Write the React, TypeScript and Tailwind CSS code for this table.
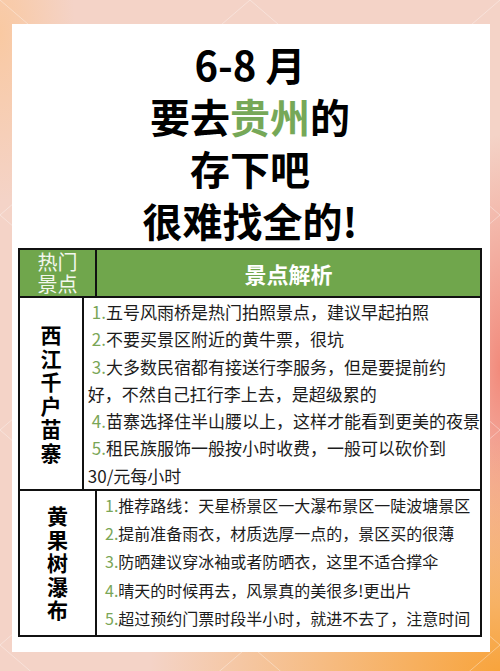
const rowOne = [
  { n: "1.", lines: ["五号风雨桥是热门拍照景点，建议早起拍照"] },
  { n: "2.", lines: ["不要买景区附近的黄牛票，很坑"] },
  { n: "3.", lines: ["大多数民宿都有接送行李服务，但是要提前约", "好，不然自己扛行李上去，是超级累的"] },
  { n: "4.", lines: ["苗寨选择住半山腰以上，这样才能看到更美的夜景"] },
  { n: "5.", lines: ["租民族服饰一般按小时收费，一般可以砍价到", "30/元每小时"] },
]

const rowTwo = [
  { n: "1.", lines: ["推荐路线：天星桥景区一大瀑布景区一陡波塘景区"] },
  { n: "2.", lines: ["提前准备雨衣，材质选厚一点的，景区买的很薄"] },
  { n: "3.", lines: ["防晒建议穿冰袖或者防晒衣，这里不适合撑伞"] },
  { n: "4.", lines: ["晴天的时候再去，风景真的美很多!更出片"] },
  { n: "5.", lines: ["超过预约门票时段半小时，就进不去了，注意时间"] },
]

function Lattice() {
  const lines = []
  for (let m = -3; m <= 5; m++) {
    const y = 215 * m
    lines.push(<line key={`a${m}`} x1={0} y1={y} x2={500} y2={y + 430} />)
    lines.push(<line key={`b${m}`} x1={0} y1={y} x2={500} y2={y - 430} />)
  }
  return (
    <svg className="absolute inset-0" width="500" height="671" viewBox="0 0 500 671">
      <g stroke="#ffffff" strokeOpacity="0.35" strokeWidth="1">{lines}</g>
    </svg>
  )
}

function Tips({ items, size }: { items: typeof rowOne; size: "lg" | "sm" }) {
  return (
    <div className={`flex-1 pl-[4px] text-[#1c1c1c] whitespace-nowrap ${size === "lg" ? "text-[17px] leading-[27.3px]" : "text-[16px] leading-[28.2px]"}`}>
      {items.map((it) =>
        it.lines.map((l, i) => (
          <div key={it.n + i} className={i === 0 ? "pl-[4px]" : ""}>
            {i === 0 && <span className="text-[#7aa657]">{it.n}</span>}
            {l}
          </div>
        ))
      )}
    </div>
  )
}

function Place({ name }: { name: string }) {
  return (
    <div className="w-[77px] border-r-2 border-[#111] flex items-center justify-center">
      <p className="w-[21px] break-all text-center text-[21px] leading-[23.5px] font-bold text-black">{name}</p>
    </div>
  )
}

export default function App() {
  return (
    <div className="relative w-[500px] h-[671px] overflow-hidden bg-[#f4d3c7] bg-[image:radial-gradient(ellipse_70%_35%_at_100%_100%,#f8a43c_0%,rgba(248,164,60,0)_100%),radial-gradient(ellipse_12%_35%_at_100%_55%,#f28a7b_0%,rgba(242,138,123,0)_100%),radial-gradient(ellipse_15%_25%_at_0%_5%,#f9c9a2_0%,rgba(249,201,162,0)_100%)] pt-[24px] pl-[12px] font-['Noto_Sans_CJK_SC',sans-serif]">
      <Lattice />
      <div className="relative w-[478px] h-[628px] bg-white pt-[14px] pl-[6px] pr-[8px]">
        <h1 className="text-center text-[40px] leading-[52px] font-bold text-black">
          6-8 月<br />要去<span className="text-[#76a858]">贵州</span>的<br />存下吧<br />很难找全的!
        </h1>

        <div className="mt-[2px] w-[464px] border-2 border-[#111]">
          <div className="flex h-[48px] bg-[#70a64c] border-b-2 border-[#111] text-white">
            <div className="w-[77px] border-r-2 border-[#111] flex items-center justify-center">
              <p className="w-[40px] break-all text-center text-[20px] leading-[22px] text-[#f3f7ee]">热门景点</p>
            </div>
            <div className="flex-1 flex items-center justify-center text-[22px] font-bold">景点解析</div>
          </div>

          <div className="flex h-[193px] border-b-2 border-[#111]">
            <Place name="西江千户苗寨" />
            <Tips items={rowOne} size="lg" />
          </div>

          <div className="flex h-[144px]">
            <Place name="黄果树瀑布" />
            <Tips items={rowTwo} size="sm" />
          </div>
        </div>
      </div>
    </div>
  )
}
